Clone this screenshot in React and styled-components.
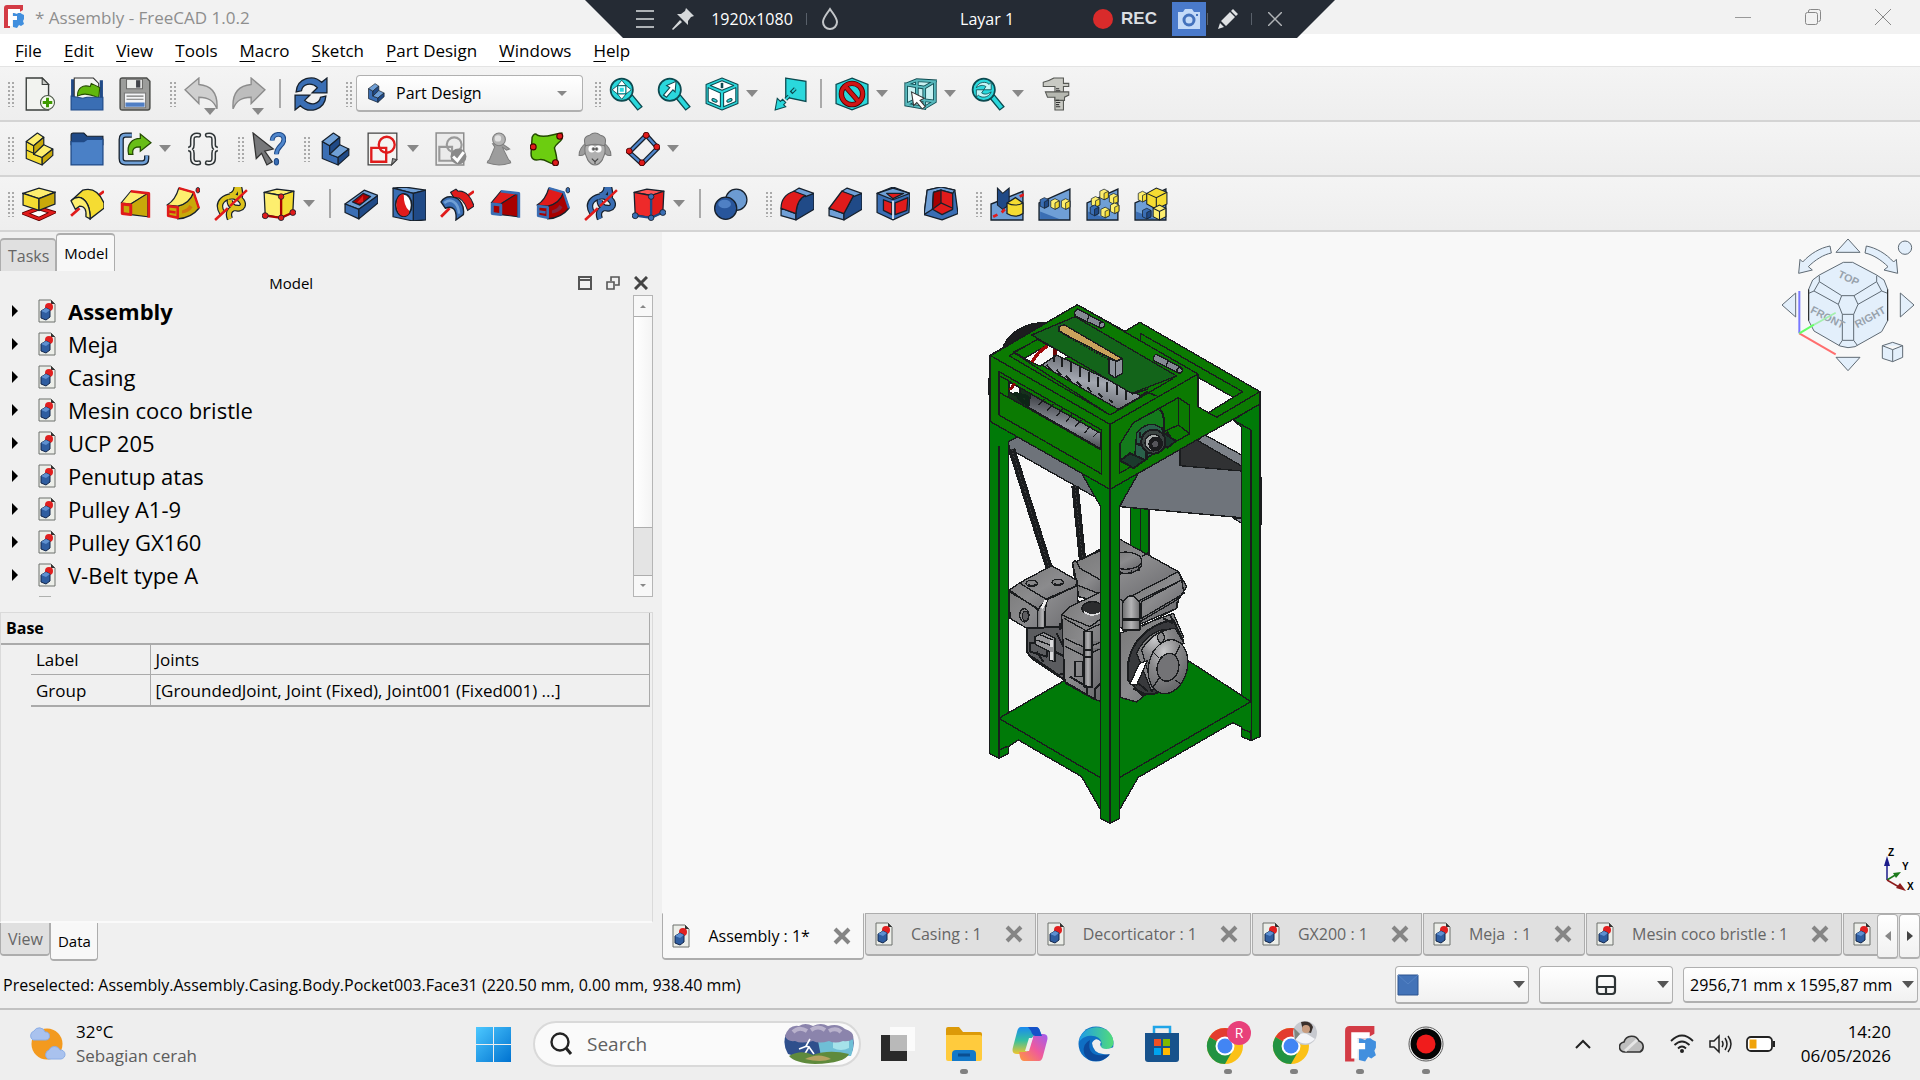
import React, { useState } from 'react';
import styled, { createGlobalStyle, css } from 'styled-components';

const K = '#16202c';
const B = '#3a6eb4';
const BL = '#6f9fd6';
const BD = '#204a87';
const Y = '#f5dc32';
const YL = '#fdee6e';
const YD = '#c8a90a';
const R = '#e01b1b';
const RD = '#a80000';
const T = '#2ad8dc';
const TD = '#0d4a50';

/* ---------- toolbar drawings, all on a 32 x 32 grid ---------- */

const magnifier = (
    <>
        <path d="M18 20l4-3 9 11-4 3z" fill={T} stroke={TD} strokeWidth="1.2" />
        <circle cx="12" cy="12" r="10.500" fill={T} stroke={TD} strokeWidth="1.6" />
    </>
);

// a step: front profile, then the faces running back to the right
const step = (top, front, side) => (
    <g stroke={K} strokeWidth="1.1" strokeLinejoin="round">
        <path d="M4 9L11 13V21L19 24V31L4 25z" fill={front} />
        <path d="M4 9L14.500 1L20.500 5L11 13z" fill={top} />
        <path d="M11 13L20.500 5V12L11 21z" fill={side} />
        <path d="M11 21L20.500 12L29 16L19 24z" fill={top} />
        <path d="M19 24L29 16V22L19 31z" fill={side} />
    </g>
);

const cube = (top, front, side) => (
    <g stroke={K} strokeWidth="1.2" strokeLinejoin="round">
        <path d="M2 5L14 2L30 4L18 8z" fill={top} />
        <path d="M2 5L18 8V29L3 26z" fill={front} />
        <path d="M18 8L30 4L29 24L18 29z" fill={side} />
    </g>
);

const sweep = (a, b, s) => (
    <g strokeLinejoin="round">
        <path d="M26 5L31 20Q24 29 11 30V18Q22 15 26 5z" fill={b} stroke={K} strokeWidth="1.2" />
        <path d="M1 17Q9 12 12 1L26 5Q22 16 11 18z" fill={a} stroke={K} strokeWidth="1.2" />
        <path d="M15 22q5-1 7-5l3 2q-3 5-10 6z" fill={s} opacity=".35" />
        <path d="M12 1L26 5L31 20" fill="none" stroke={s} strokeWidth="2.2" />
        <path d="M2 18L11 19V29L2 27z" fill={b} stroke={s} strokeWidth="2.4" />
        <path d="M3 23l6 1" stroke={s} strokeWidth="2.4" />
        <ellipse cx="30" cy="3" rx="1.800" ry="2.600" fill={s} stroke={K} strokeWidth=".8" />
    </g>
);

const coil = 'M8 25C1 14 11 8 19 9C27 11 30 18 24 20C19 21 14 17 15 12M24 20C17 18 12 23 15 30M15 8Q20 7 21 2L24 2Q25 6 24 11';

const helix = (a) => (
    <>
        <path d={coil} fill="none" stroke={K} strokeWidth="6" />
        <path d={coil} fill="none" stroke={a} strokeWidth="3.800" />
        <path d="M1 31L13 20M15 18L31 3" stroke={R} strokeWidth="2.400" />
    </>
);

const primitive = (top, front, side, line, knob) => (
    <>
        {cube(top, front, side)}
        <path d="M18 9V29M3 27L18 29L29 24" stroke={line} strokeWidth="2.200" fill="none" />
        <g fill={knob} stroke={K} strokeWidth=".8">
            <circle cx="18" cy="9" r="2.600" /><circle cx="3" cy="27" r="2.800" />
            <circle cx="18" cy="29" r="2.600" /><circle cx="29" cy="24" r="2.800" />
        </g>
    </>
);

const loft = (a, b, s) => (
    <g strokeLinejoin="round">
        <path d="M3 15L12 4L28 6L12 16z" fill={a} stroke={K} strokeWidth="1" />
        <path d="M12 16L28 6V28L12 26z" fill={b} stroke={K} strokeWidth="1" />
        <path d="M12 4L29 6V29" fill="none" stroke={s} strokeWidth="2.600" />
        <path d="M4 16L12 17V26L4 25z" fill={b} stroke={s} strokeWidth="2.800" />
    </g>
);

const miniCube = (x, y, a, b) => (
    <g key={x + '-' + y} stroke={K} strokeWidth=".7">
        <path d={`M${x} ${y + 2}l4-2 4 2v6l-4 2-4-2z`} fill={a} />
        <path d={`M${x + 4} ${y + 4}l4-2v6l-4 2z`} fill={b} />
    </g>
);

const ramp = (
    <>
        <path d="M1 31v-16l29-13v29z" fill={BL} stroke={K} strokeWidth="1.300" />
        <path d="M2 23l18 7h-18z" fill={B} />
    </>
);

const icons = {
    newDoc: (
        <>
            <path d="M4 1h15l6 6v24h-21z" fill="#f2f3f0" stroke="#3b3f3d" strokeWidth="1.300" />
            <path d="M19 1v6h6z" fill="#c9cbc6" stroke="#3b3f3d" />
            <circle cx="24" cy="24" r="6.600" fill="#f6fbef" stroke="#4b5648" />
            <path d="M24 19.500v9M19.500 24h9" stroke="#3f9a00" strokeWidth="2.800" />
        </>
    ),
    open: (
        <>
            <path d="M1 2h3v28h-3zM28 3h3v27h-3z" fill={BD} />
            <path d="M4 1h18l5 5v16h-23z" fill="#f4f5f2" stroke="#333" />
            <path d="M7 18c0-8 5-11 12-9l1-3 8 4-1 10-4-2c-7-2-10-3-16 0z" fill="#61b80c" stroke="#254b00" />
            <path d="M1 18l11 2 4-1h15v12h-30z" fill={B} stroke={BD} />
        </>
    ),
    save: (
        <>
            <path d="M2 3q0-2 2-2h23l3 3v25q0 2-2 2h-24q-2 0-2-2z" fill="#9c9d9b" stroke="#4c4e4b" strokeWidth="1.400" />
            <path d="M8 2h15v9h-15z" fill="#ecedeb" stroke="#6a6a68" />
            <path d="M17 3h4v7h-4z" fill="#42444a" />
            <path d="M6 15h20v14h-20z" fill="#f3f4f6" stroke="#777" />
            <path d="M8 18h16M8 21h16" stroke="#777" />
            <path d="M7 24h18v4h-18z" fill="#4f7ec4" />
        </>
    ),
    undo: <path d="M1 12l13-11v6c12 1 18 9 17 23-3-8-8-11-17-11v6z" fill="#cfcfcf" stroke="#8c8c8c" strokeWidth="1.300" />,
    redo: <path d="M31 12l-13-11v6c-12 1-18 9-17 23 3-8 8-11 17-11v6z" fill="#bdbdbd" stroke="#8c8c8c" strokeWidth="1.300" />,
    refresh: (
        <g fill={B} stroke={K} strokeWidth="1.200">
            <path d="M2 14c1-13 16-17 24-9l5-4v14h-14l5-5c-6-6-14-3-15 3z" />
            <path d="M30 18c-1 13-16 17-24 9l-5 4v-14h14l-5 5c6 6 14 3 15-3z" />
        </g>
    ),
    fit: (
        <>
            {magnifier}
            <path d="M12 3l4 5h-8zM12 21l4-5h-8zM3 12l5-4v8zM21 12l-5-4v8z" fill="#fff" stroke={TD} strokeWidth=".8" />
            <path d="M9.500 9.500h5v5h-5z" fill={T} stroke="#fff" strokeWidth="1.200" />
        </>
    ),
    zoomSel: (
        <>
            {magnifier}
            <path d="M6 17l6-7-3-2 9-4-1 10-2-2-6 7z" fill="#fff" stroke={TD} />
        </>
    ),
    isoView: (
        <g stroke={TD} strokeWidth="1" strokeLinejoin="round">
            <path d="M16 1l15 6v18l-15 6-15-6v-18z" fill={T} />
            <path d="M16 3.500l11 4.500-11 4.500-11-4.500zM3 10l11.500 5v13l-11.500-5zM29 10l-11.500 5v13l11.500-5z" fill="#fff" />
            <path d="M16 5.500v5" strokeWidth="2.400" />
            <ellipse cx="9" cy="22" rx="2.600" ry="1.300" transform="rotate(24 9 22)" fill={T} /><ellipse cx="23" cy="22" rx="2.600" ry="1.300" transform="rotate(-24 23 22)" fill={T} />
        </g>
    ),
    alignView: (
        <>
            <path d="M12 1l19 3v19l-19-4z" fill={T} stroke={TD} strokeWidth="1.200" />
            <path d="M2 31l2-11 3 3 2-2 3 3-2 2 2 2z" fill={T} stroke={TD} />
            <path d="M12 21l3-3M17 15l4-4" stroke={TD} strokeWidth="3.600" /><path d="M12 21l3-3M18 14l3-3" stroke={T} strokeWidth="1.600" />
        </>
    ),
    noDraw: (
        <>
            <path d="M16 1l15 6v18l-15 6-15-6v-18z" fill={T} stroke={TD} strokeWidth="1.200" />
            <circle cx="16" cy="16" r="10" fill="none" stroke="#4a0000" strokeWidth="5" />
            <path d="M9 8l14 16" stroke="#4a0000" strokeWidth="5" />
            <circle cx="16" cy="16" r="10" fill="none" stroke="#cf1515" strokeWidth="3.400" />
            <path d="M9 8l14 16" stroke="#cf1515" strokeWidth="3.400" />
        </>
    ),
    cubeSel: (
        <>
            <path d="M3 7l10-4 17 1v19l-10 6-17-3z" fill="#c9f1f2" />
            <path d="M3 7l17 3v19l-17-3zM3 7l10-4 17 1-10 6M30 4v19l-10 6M13 3v18l-10 5M13 21l17 2" fill="none" stroke={TD} strokeWidth="3.400" />
            <path d="M3 7l17 3v19l-17-3zM3 7l10-4 17 1-10 6M30 4v19l-10 6M13 3v18l-10 5M13 21l17 2" fill="none" stroke="#58b9bd" strokeWidth="1.800" />
            <path d="M8 14l12 6-4 2 5 6-3 2-5-6-3 3z" fill="#fff" stroke="#333" />
        </>
    ),
    syncView: (
        <>
            {magnifier}
            <path d="M5 10c2-6 10-6 12-3l2-2v7h-7l2-3c-3-2-6-1-9 1zM19 14c-2 6-10 6-12 3l-2 2v-7h7l-2 3c3 2 6 1 9-1z" fill="#c4f6f7" stroke={TD} strokeWidth=".8" />
        </>
    ),
    caliper: (
        <>
            <path d="M14 1h9v5h5v3h-5v22h-8v-22h-11v-4q5-1 10-4z" fill="#c9cac4" stroke="#555753" />
            <path d="M6 14h22v3l-4 2v3h-9v-3h-7z" fill="#b6b8b1" stroke="#555753" />
            <path d="M16 11h3M16 13h4M16 22h3M16 24h4M16 26h3M16 28h4" stroke="#333" />
        </>
    ),
    part: (
        <>
            {step(YL, Y, YD)}
            <path d="M4 17l7 3" stroke={K} />
        </>
    ),
    folder: (
        <>
            <path d="M1 3q0-2 2-2h10l3 3h15v8h-30z" fill={BD} stroke={K} />
            <path d="M1 9h12l3-2h15v24h-30z" fill="#4a80c6" stroke={BD} strokeWidth="1.200" />
        </>
    ),
    link: (
        <>
            <path d="M13 3h-6q-4 0-4 4v18q0 4 4 4h16q4 0 4-4v-3" fill="none" stroke={K} strokeWidth="5" />
            <path d="M13 3h-6q-4 0-4 4v18q0 4 4 4h16q4 0 4-4v-3" fill="none" stroke={BL} strokeWidth="2.600" />
            <path d="M10 21c-2-9 3-15 11-15v-4l10 8-10 8v-4c-5 0-8 1-7 7z" fill="#68bd16" stroke="#234a00" strokeWidth="1.200" />
        </>
    ),
    braces: (
        <g fill="none" strokeLinecap="round">
            <path d="M12 3q-6-1-6 4v5q0 4-4 4 4 0 4 4v5q0 5 6 4M20 3q6-1 6 4v5q0 4 4 4-4 0-4 4v5q0 5-6 4" stroke="#2e3436" strokeWidth="4.600" />
            <path d="M12 3q-6-1-6 4v5q0 4-4 4 4 0 4 4v5q0 5 6 4M20 3q6-1 6 4v5q0 4 4 4-4 0-4 4v5q0 5-6 4" stroke="#f4f4f4" strokeWidth="1.800" />
        </g>
    ),
    whatsThis: (
        <>
            <path d="M1 1l19 15-8 2 7 10-5 3-5-11-5 5z" fill="#77787a" stroke="#333" strokeWidth="1.200" />
            <path d="M19 8c0-7 11-8 11-1 0 6-7 6-7 14" fill="none" stroke={BD} strokeWidth="4.600" />
            <path d="M19 8c0-7 11-8 11-1 0 6-7 6-7 14" fill="none" stroke="#4f86cc" strokeWidth="2.600" />
            <ellipse cx="23" cy="28" rx="2" ry="3" fill={B} stroke={BD} />
        </>
    ),
    body: step(BL, B, BD),
    sketch: (
        <>
            <path d="M2 1h27v25l-5 5h-22z" fill="#f4f4f2" stroke="#444" strokeWidth="1.200" />
            <path d="M24 31l1-6 4 1z" fill="#999" stroke="#444" />
            <path d="M5 15h14v13h-14z" fill="none" stroke={R} strokeWidth="2.200" />
            <circle cx="19.500" cy="12" r="7.500" fill="none" stroke={R} strokeWidth="2.200" />
        </>
    ),
    sketchCheck: (
        <>
            <path d="M2 1h26v30h-26z" fill="#ebebeb" stroke="#8d8d8d" strokeWidth="1.400" />
            <path d="M5 14h12v13h-12z" fill="none" stroke="#9a9a9a" strokeWidth="2" />
            <circle cx="19" cy="12" r="7" fill="none" stroke="#9a9a9a" strokeWidth="2" />
            <circle cx="23" cy="23" r="7.500" fill="#8a8a8a" />
            <path d="M18 23l4 4 6-8" fill="none" stroke="#fff" strokeWidth="2.800" />
        </>
    ),
    pawn: (
        <>
            <path d="M5 29q0-2 2-3l5-12-2-3h9l7 5-3 1-4-3 6 12q2 1 2 3-11 4-22 0z" fill="#9d9d9d" stroke="#7e7e7e" />
            <circle cx="16" cy="7" r="6" fill="#b4b4b4" stroke="#7e7e7e" /><circle cx="15" cy="6" r="3" fill="#e2e2e2" />
        </>
    ),
    surface: (
        <>
            <path d="M2 5q2-5 5-2c8 3 13-1 23-2 3 8-6 9-7 14 2 8 3 10 2 15-8 1-9-5-16-4-5 1-8 0-8-6z" fill="#6ccd10" stroke="#234a00" strokeWidth="1.400" />
            <g fill={R} stroke="#400"><circle cx="28" cy="4" r="2.800" /><circle cx="3" cy="14" r="2.800" /><circle cx="24" cy="29" r="2.800" /></g>
        </>
    ),
    sheep: (
        <g stroke="#777" strokeWidth="1">
            <path d="M8 10q-7 5-7 12 6 1 7-6zM24 10q7 5 7 12-6 1-7-6z" fill="#9c9c9c" />
            <path d="M7 12c-2 9 1 10 2 14q3 5 7 5 4 0 7-5c1-4 4-5 2-14z" fill="#b0b0b0" />
            <path d="M7 13q-3-9 4-10 5-4 10 0 7 1 4 10-9-3-18 0z" fill="#a3a3a3" />
            <circle cx="13" cy="16" r="3.200" fill="#fff" stroke="none" /><circle cx="19" cy="16" r="3.200" fill="#fff" stroke="none" />
            <circle cx="14.500" cy="16" r="1.200" fill="#444" /><circle cx="17.500" cy="16" r="1.200" fill="#444" />
            <path d="M13 25l3 3 3-3M16 28v2" fill="none" stroke="#444" />
        </g>
    ),
    datum: (
        <>
            <path d="M19 3l11 12-15 15-12-11z" fill="none" stroke={K} strokeWidth="4.600" />
            <path d="M19 3l11 12-15 15-12-11z" fill="none" stroke="#4f86cc" strokeWidth="2.200" />
            <g fill={R} stroke="#400" strokeWidth=".8">
                <circle cx="19" cy="3" r="2.800" /><circle cx="29" cy="14" r="2.800" /><circle cx="15" cy="29" r="2.800" /><circle cx="3" cy="18" r="2.800" />
            </g>
        </>
    ),
    pad: (
        <>
            <path d="M3 25l13-5 13 4-13 6z" fill="#fff" stroke="#5a0000" strokeWidth="4" />
            <path d="M3 25l13-5 13 4-13 6z" fill="none" stroke={R} strokeWidth="2.400" />
            <g stroke={K} strokeWidth="1.200">
                <path d="M1 6l15-5 15 4-15 6z" fill={YL} /><path d="M1 6l15 5v11l-15-5z" fill={Y} /><path d="M16 11l15-6v11l-15 6z" fill={YD} />
            </g>
        </>
    ),
    revolution: (
        <>
            <path d="M24 10l8-6M1 27l8-7" stroke={R} strokeWidth="2.600" />
            <path d="M1 13L12 3Q25 -1 32 15V20L19 30Q19 14 10 10Q5 9 1 13z" fill={Y} stroke={K} strokeWidth="1.200" />
            <path d="M1 13Q5 9 10 10Q19 14 19 30L15 28Q16 18 9 18L5 21z" fill={YL} stroke={K} strokeWidth="1.200" />
        </>
    ),
    loft: loft(YL, YD, R),
    sweep: sweep(YL, YD, R),
    helix: helix('#dcc21c'),
    primitive: primitive(YL, YL, Y, RD, R),
    pocket: (
        <g stroke={K} strokeWidth="1.200" strokeLinejoin="round">
            <path d="M1 16L19 3L32 8L14 21z" fill={BL} /><path d="M1 16L14 21V30L1 24z" fill={B} /><path d="M14 21L32 8V15L14 30z" fill={BD} />
            <path d="M8 14L18 6L25 9L15 17z" fill={RD} /><path d="M12 15L18 8V14z" fill={R} stroke="none" />
        </g>
    ),
    hole: (
        <g stroke={K} strokeWidth="1.200" strokeLinejoin="round">
            <path d="M1 1L12 0L32 3L20 6z" fill={BL} /><path d="M20 6L32 3V31L20 32z" fill={BD} /><path d="M1 1L20 6V32L1 28z" fill={B} />
            <ellipse cx="11" cy="17" rx="7.500" ry="10.500" fill="#fff" strokeWidth="1.600" />
            <path d="M11 6.500C2 7 2 26 11 27.500Q17 27 16 22Q11 18 11 6.500z" fill={R} stroke="none" />
        </g>
    ),
    groove: (
        <>
            <path d="M25 9l7-5M1 28l8-8" stroke={R} strokeWidth="2.600" />
            <path d="M10 5l5-3 2 2c8-1 13 7 15 14l-6 4c-3-9-7-13-13-12z" fill={R} stroke={K} />
            <path d="M1 14c5-8 16-5 19 1q3 5 2 11l-7 5c1-10-3-14-10-11z" fill={B} stroke={K} strokeWidth="1.300" />
            <path d="M4 15c6-5 13-1 14 10" stroke={BL} strokeWidth="2.400" fill="none" />
        </>
    ),
    subLoft: loft(R, RD, B),
    subSweep: sweep(R, RD, B),
    subHelix: helix(B),
    subPrimitive: primitive('#f55', '#ee2a2a', R, BD, B),
    boolean: (
        <g stroke={K} strokeWidth="1.200">
            <circle cx="21" cy="12" r="10" fill="#6c9bd2" /><circle cx="11" cy="20" r="10.400" fill="#28569c" />
            <ellipse cx="10" cy="16" rx="6" ry="4" fill="#4f80c4" stroke="none" />
        </g>
    ),
    fillet: (
        <g stroke={K} strokeWidth="1.200" strokeLinejoin="round">
            <path d="M1 20L15 25V31L1 27z" fill={BL} />
            <path d="M15 25Q16 11 24 8L32 6V21L15 31z" fill={BD} />
            <path d="M13 4L18 1L32 6L24 9z" fill={BL} />
            <path d="M1 20Q1 8 13 4L24 8Q16 11 15 25z" fill={R} />
        </g>
    ),
    chamfer: (
        <g stroke={K} strokeWidth="1.200" strokeLinejoin="round">
            <path d="M1 20L15 25V31L1 27z" fill={BL} />
            <path d="M15 25L24 8L32 6V21L15 31z" fill={BD} />
            <path d="M13 4L18 1L32 6L24 9z" fill={BL} />
            <path d="M1 20L13 4L24 8L15 25z" fill={R} />
        </g>
    ),
    draft: (
        <g stroke={K} strokeWidth="1.200" strokeLinejoin="round">
            <path d="M1 6L16 0L32 6L31 24L16 31L1 24z" fill={B} /><path d="M1 6L16 1L32 6L16 12z" fill={BL} />
            <path d="M10 6L26 6L16 11z" fill={R} />
            <path d="M7 12L15 15V26L7 22z" fill={R} /><path d="M18 15L30 10L29 22L18 26z" fill={R} />
            <path d="M16 13V30" stroke="#e8eef5" strokeWidth="1.600" />
        </g>
    ),
    thickness: (
        <g stroke={K} strokeWidth="1.200" strokeLinejoin="round">
            <path d="M3 3L16 0L29 3L32 25L17 31L0 26z" fill={B} /><path d="M3 3L16 0L29 3L27 6L16 3L9 5L8 21L0 26z" fill={BL} />
            <path d="M9 5L16 3L27 6V21L17 26L8 21z" fill={R} /><path d="M9 5L16 3V15L8 21z" fill={RD} /><path d="M16 15L27 20" fill="none" />
        </g>
    ),
    mirrored: (
        <>
            <path d="M1 31v-15l30-12v27z" fill={BL} stroke={K} strokeWidth="1.300" />
            <path d="M7 1l5 5 6-5v16l-6 4-5-4z" fill={BD} stroke={K} />
            <path d="M3 28l4-2M11 24l3-3M28 9l4-2" stroke={R} strokeWidth="2.600" />
            <path d="M16 15l8-5 7 5v10q-7 5-15 0z" fill={Y} stroke={K} strokeWidth="1.200" /><path d="M16 15q8 4 15 0" fill="none" stroke={K} />
        </>
    ),
    linearPattern: <>{ramp}{miniCube(2, 10, B, BD)}{miniCube(12, 11, YL, Y)}{miniCube(22, 11, YL, Y)}</>,
    polarPattern: <>{ramp}{miniCube(13, 2, YL, Y)}{miniCube(5, 9, YL, Y)}{miniCube(22, 6, YL, Y)}{miniCube(4, 17, B, BD)}{miniCube(23, 15, YL, Y)}{miniCube(14, 19, YL, Y)}</>,
    multiTransform: (
        <>
            {ramp}{miniCube(4, 4, YL, Y)}
            <path d="M12 6l9-5 10 4v11l-10 5-9-5z" fill={Y} stroke={K} /><path d="M12 6l9 4 10-5M21 10v11" fill="none" stroke={K} />
            {miniCube(8, 20, B, BD)}<path d="M18 20l6-3 6 3v8l-6 3-6-3z" fill={YL} stroke={K} /><path d="M18 20l6 3 6-3M24 23v8" fill="none" stroke={K} />
        </>
    ),
};

function Icon({ name, size = 34 }) {
    return <svg width={size} height={size} viewBox="0 0 32 32" aria-hidden="true">{icons[name]}</svg>;
}

function DocIcon() {
    return (
        <svg width="18" height="24" viewBox="0 0 18 24" aria-hidden="true">
            <path d="M1 1h12l4 4v18H1z" fill="#eceee9" stroke="#6d716c" />
            <path d="M13 1v4h4z" fill="#333" />
            <circle cx="11" cy="8" r="4" fill="#e02020" />
            <path d="M3 12l5-3 4 2v7l-4 3-5-2z" fill="#2f5da0" stroke="#13264a" />
            <path d="M3 12l5-3 4 2-4 3z" fill="#5e90d0" />
        </svg>
    );
}

function CloseIcon() {
    return (
        <svg width="18" height="18" viewBox="0 0 18 18" aria-hidden="true">
            <path d="M2 2l14 14M16 2L2 16" stroke="#858585" strokeWidth="4" />
        </svg>
    );
}

function FreeCadLogo({ width, height }) {
    return (
        <svg width={width} height={height} viewBox="0 0 20 24" aria-hidden="true">
            <path d="M3 0h16v5l-5 3H6v15H0V3q0-3 3-3z" fill="#d33b45" />
            <path d="M10 8l3 1 2-2 3 2 2 1v4l-1 2 1 3-3 2-2-1-2 3-4-1V8z" fill="#418fde" />
            <path d="M4 4h12v4h-8v3h5v4h-5v6H4z" fill="#fff" />
        </svg>
    );
}

const menus = ['File', 'Edit', 'View', 'Tools', 'Macro', 'Sketch', 'Part Design', 'Windows', 'Help'];

// '|' is a separator, a trailing 'v' in the pair means a drop-down arrow beside the button
const standardBars = [
    [
        [['newDoc'], ['open'], ['save']],
        [['undo'], ['redo'], '|', ['refresh']],
        'workbench',
        [['fit'], ['zoomSel'], ['isoView', 'v'], ['alignView'], '|', ['noDraw', 'v'], ['cubeSel', 'v'], ['syncView', 'v'], ['caliper']],
    ],
    [
        [['part'], ['folder'], ['link', 'v'], ['braces']],
        [['whatsThis']],
        [['body'], ['sketch', 'v'], ['sketchCheck'], ['pawn'], ['surface'], ['sheep'], ['datum', 'v']],
    ],
    [
        [['pad'], ['revolution'], ['loft'], ['sweep'], ['helix'], ['primitive', 'v'], '|', ['pocket'], ['hole'], ['groove'], ['subLoft'], ['subSweep'], ['subHelix'], ['subPrimitive', 'v'], '|', ['boolean']],
        [['fillet'], ['chamfer'], ['draft'], ['thickness']],
        [['mirrored'], ['linearPattern'], ['polarPattern'], ['multiTransform']],
    ],
];

const treeItems = ['Assembly', 'Meja', 'Casing', 'Mesin coco bristle', 'UCP 205', 'Penutup atas', 'Pulley A1-9', 'Pulley GX160', 'V-Belt type A', ''];

const documents = ['Assembly : 1*', 'Casing : 1', 'Decorticator : 1', 'GX200 : 1', 'Meja  : 1', 'Mesin coco bristle : 1'];

function ToolGroup({ items }) {
    return (
        <Group>
            <Grip />
            {items === 'workbench' ? (
                <Workbench>
                    <Icon name="body" size={20} />
                    <WorkbenchSelect aria-label="Workbench" defaultValue="Part Design">
                        <option>Part Design</option>
                    </WorkbenchSelect>
                    <Caret $small />
                </Workbench>
            ) : items.map((item, i) => item === '|' ? <Separator key={i} /> : (
                <React.Fragment key={i}>
                    <ToolButton aria-label={item[0]}>
                        <Icon name={item[0]} />
                        {(item[0] === 'undo' || item[0] === 'redo') && <CornerCaret />}
                    </ToolButton>
                    {item[1] && <DropButton aria-label={item[0] + ' options'}><Caret /></DropButton>}
                </React.Fragment>
            ))}
        </Group>
    );
}

function RecorderBar() {
    return (
        <Recorder>
            <RecorderIcon aria-label="Menu">
                <svg width="18" height="20" viewBox="0 0 18 20"><path d="M0 2h18M0 10h18M0 18h18" stroke="#aeb2b6" strokeWidth="2" /></svg>
            </RecorderIcon>
            <RecorderIcon aria-label="Pin">
                <svg width="22" height="22" viewBox="0 0 22 22"><path d="M14 0l8 8-3 1-3 4 0 4-11-11 4 0 4-3zM8 12l2 2-9 8-1-1z" fill="#d5d8da" /></svg>
            </RecorderIcon>
            <RecorderText>1920x1080</RecorderText>
            <RecorderLine />
            <RecorderIcon aria-label="Opacity">
                <svg width="18" height="24" viewBox="0 0 18 24"><path d="M9 2c4 6 7 9 7 13a7 7 0 0 1-14 0c0-4 3-7 7-13z" fill="none" stroke="#c3c6c9" strokeWidth="2" /></svg>
            </RecorderIcon>
            <RecorderTitle>Layar 1</RecorderTitle>
            <RecordButton><RecordDot />REC</RecordButton>
            <Camera aria-label="Screenshot">
                <svg width="24" height="20" viewBox="0 0 24 20"><path d="M1 3h5l2-3h7l2 3h6v17H1z" fill="#c4daf8" /><circle cx="12" cy="11" r="5" fill="none" stroke="#4472bd" strokeWidth="3" /><path d="M19 5h2v2h-2z" fill="#4472bd" /></svg>
            </Camera>
            <RecorderLine $tight />
            <RecorderIcon aria-label="Draw">
                <svg width="20" height="20" viewBox="0 0 20 20"><path d="M3 12L12 3l5 5-9 9zM13 2l2-2 5 5-2 2zM2 14l4 4-6 2z" fill="#e0e2e4" /></svg>
            </RecorderIcon>
            <RecorderLine />
            <RecorderIcon aria-label="Close recorder">
                <svg width="14" height="14" viewBox="0 0 14 14"><path d="M0 0l14 14M14 0L0 14" stroke="#b0b3b6" strokeWidth="1.500" /></svg>
            </RecorderIcon>
        </Recorder>
    );
}

function ModelPanel() {
    return (
        <Dock>
            <TabRow>
                <DockTab>Tasks</DockTab>
                <DockTab $active>Model</DockTab>
            </TabRow>
            <DockTitle>
                <span>Model</span>
                <DockTools>
                    <DockTool aria-label="Overlay"><svg width="14" height="14" viewBox="0 0 14 14"><path d="M1 1h12v12H1zM1 4h12" fill="none" stroke="#555" strokeWidth="2" /></svg></DockTool>
                    <DockTool aria-label="Float"><svg width="14" height="14" viewBox="0 0 14 14"><path d="M1 6h7v7H1zM5 5V1h8v8H9" fill="none" stroke="#555" strokeWidth="1.600" /></svg></DockTool>
                    <DockTool aria-label="Close panel"><svg width="14" height="14" viewBox="0 0 14 14"><path d="M1 1l12 12M13 1L1 13" stroke="#444" strokeWidth="3" /></svg></DockTool>
                </DockTools>
            </DockTitle>
            <TreeArea>
                <Tree>
                    {treeItems.map((name, i) => (
                        <TreeRow key={i} $bold={i === 0}>
                            <svg width="8" height="12" viewBox="0 0 8 12" aria-hidden="true"><path d="M1 0l6 6-6 6z" fill="#000" /></svg>
                            <DocIcon />
                            <span>{name}</span>
                        </TreeRow>
                    ))}
                </Tree>
                <ScrollBar>
                    <ScrollEnd aria-label="Scroll up"><svg width="6" height="4" viewBox="0 0 6 4"><path d="M0 4l3-3 3 3z" fill="#888" /></svg></ScrollEnd>
                    <ScrollTrack><ScrollThumb /></ScrollTrack>
                    <ScrollEnd aria-label="Scroll down"><svg width="6" height="4" viewBox="0 0 6 4"><path d="M0 0l3 3 3-3z" fill="#888" /></svg></ScrollEnd>
                </ScrollBar>
            </TreeArea>
            <Properties>
                <PropTable>
                    <tbody>
                        <tr><PropHead colSpan="3" scope="colgroup">Base</PropHead></tr>
                        <tr><PropIndent /><PropName scope="row">Label</PropName><PropValue>Joints</PropValue></tr>
                        <tr><PropIndent /><PropName scope="row" $last>Group</PropName><PropValue $last>[GroundedJoint, Joint (Fixed), Joint001 (Fixed001) ...]</PropValue></tr>
                    </tbody>
                </PropTable>
            </Properties>
            <TabRow $bottom>
                <DockTab $bottom>View</DockTab>
                <DockTab $bottom $active>Data</DockTab>
            </TabRow>
        </Dock>
    );
}

/* the decorticator: frame, casing, drum, hopper and engine */
function Machine() {
    const top = '#0b7a02';
    const leg = '#007a08';
    const belts = 'M155 478L268 835M345 588L368 815';
    return (
        <svg width="330" height="550" viewBox="0 0 990 1650" shapeRendering="crispEdges" strokeLinejoin="round" role="img" aria-label="Assembly model">
            <defs>
                <linearGradient id="drum" x1=".6" y1=".1" x2=".4" y2=".9">
                    <stop offset="0" stopColor="#6c6f76" /><stop offset=".5" stopColor="#a3a7b0" /><stop offset="1" stopColor="#6c6f76" />
                </linearGradient>
                <linearGradient id="drum2" x1=".6" y1=".1" x2=".4" y2=".9">
                    <stop offset="0" stopColor="#33353a" /><stop offset=".6" stopColor="#8e929b" /><stop offset="1" stopColor="#3d3f44" />
                </linearGradient>
                <linearGradient id="metal" x1="0" y1="0" x2="1" y2="1">
                    <stop offset="0" stopColor="#767676" /><stop offset=".5" stopColor="#8b8b8d" /><stop offset="1" stopColor="#66666a" />
                </linearGradient>
                <linearGradient id="shine" x1="0" y1="0" x2="1" y2="0">
                    <stop offset="0" stopColor="#6c6c6e" /><stop offset=".5" stopColor="#b4b4b6" /><stop offset="1" stopColor="#6c6c6e" />
                </linearGradient>
                <radialGradient id="cover" cx=".3" cy=".25" r=".9">
                    <stop offset="0" stopColor="#c8c8ca" /><stop offset=".4" stopColor="#88888a" /><stop offset="1" stopColor="#5f5f62" />
                </radialGradient>
            </defs>
            <g stroke="#1a1c1e" strokeWidth="4">
                <path d="M130 168C150 125 200 94 262 99L280 120L200 170z" fill="#1d1d1f" />
                <path d="M86 265v50" strokeWidth="6" />
                <path d="M904 560v145" strokeWidth="5" />
                {/* rear leg and hopper */}
                <path d="M512 640h55v200h-55zM541 650v180" fill={leg} />
                <path d="M145 455L175 438L420 560L422 628L400 618L148 476z" fill="#6e737a" />
                <path d="M480 650L530 553L735 435L845 495V683z" fill="#6f747b" />
                <path d="M735 435L845 495V528L710 452z" fill="#7d8289" />
                <path d="M660 465L710 450L845 528V543L660 527z" fill="#303133" />
                <path d="M820 684L845 700v-16z" fill="#8b9097" />
                {/* base plate */}
                <path d="M117 1285L480 1075L560 1030L873 1235L478 1463L450 1480z" fill={leg} />
                <path d="M117 1285L450 1480L478 1463L873 1235L900 1240V1340L873 1352L845 1340V1312L818 1298L535 1462L478 1560V1585L450 1600L422 1585V1560L365 1460L175 1350L145 1370V1390L117 1405L88 1390V1270z" fill={leg} />
                <path d="M117 1405V1380L145 1368M873 1352V1328L845 1316" fill="none" />
                {/* belts */}
                <path d={belts} strokeWidth="22" fill="none" />
                <path d={belts} strokeWidth="3" stroke="#3c3c3e" fill="none" strokeDasharray="5 6" />

                {/* engine */}
                <g fill="url(#metal)">
                    <path d="M480 1030L640 970L670 1040L560 1210L530 1236L480 1222z" />
                    <path d="M338 820L480 748L655 845L680 890L655 930L650 955L500 1020L430 990L345 880z" />
                    <path d="M338 820L425 780L480 748L655 845L520 915L490 935L440 895z" />
                    <path d="M655 845L665 870L530 935L520 915zM665 870L672 910L545 985V935z" />
                    <path d="M672 905L650 930L540 995M650 935L650 955L545 1010" fill="none" />
                    <ellipse cx="497" cy="820" rx="48" ry="30" /><ellipse cx="497" cy="812" rx="48" ry="26" />
                    <path d="M545 800L570 785M450 830v14M480 842v12M515 840v12M537 832v12" fill="none" />
                    <path d="M487 940Q512 895 540 940V985H487z" fill="url(#shine)" /><path d="M487 990h53v30h-53z" fill="url(#shine)" />
                    <path d="M338 820Q345 800 360 835L440 880V920L352 885z" />
                    <path d="M352 885L440 920V940L355 920z" />
                    <path d="M148 900L275 827L352 872L355 980L240 1038L150 985z" />
                    <path d="M148 900L180 878L275 827L352 872L345 890L260 930L235 960z" />
                    <path d="M148 905L232 955V1028M235 960L262 925L355 885M180 880L262 930" fill="none" />
                    <path d="M240 950L262 928L255 965V1030L232 1030V965z" fill="url(#shine)" />
                    <path d="M245 955L258 930" stroke="#eee" strokeWidth="8" />
                    <ellipse cx="215" cy="880" rx="17" ry="9" /><ellipse cx="293" cy="877" rx="17" ry="9" />
                    <path d="M203 884q12 10 25 0M281 881q12 10 25 0" strokeWidth="7" fill="none" />
                    <ellipse cx="193" cy="976" rx="14" ry="20" /><ellipse cx="196" cy="978" rx="9" ry="14" fill="#5d5d60" />
                </g>
                {/* carburettor side */}
                <path d="M200 1015L305 1010L340 1090V1185L290 1155L215 1105L200 1085z" fill="#5b5c5f" strokeWidth="6" />
                <path d="M210 1060v25l50 15v-40zM275 1080l40 20v40M215 1100l80 55 40-10M290 1030l30 60M230 1085l20 30M300 1020v-20M335 1100v70M312 1060v115" fill="none" strokeWidth="6" />
                <path d="M225 1040L250 1028L285 1045V1115L268 1110V1085L225 1062z" fill="#97979a" /><path d="M274 1050v20M274 1085v26" stroke="#dcdcde" strokeWidth="8" />
                <path d="M230 1050l40 15M240 1034l38 16" fill="none" />
                <path d="M305 975L425 905V1235L405 1228L315 1175z" fill="url(#metal)" />
                <path d="M305 975L330 950L425 905V985L390 1010zM312 985L378 1022L425 1000M315 1045L378 1075L425 1055M315 1068L372 1098L425 1075" fill="url(#metal)" />
                <path d="M372 1025h24v165h-24z" fill="url(#shine)" /><path d="M370 1080h30M370 1100h30M372 1190h28" strokeWidth="7" />
                <path d="M345 1115h24v45h-24z" fill="none" /><path d="M330 1160l50 30v25M315 1178l90 50v-30l20-20" fill="none" strokeWidth="6" />
                <ellipse cx="398" cy="955" rx="32" ry="20" fill="#2b2c2e" /><path d="M372 965q20 18 50 3" stroke="#dcdcde" strokeWidth="5" fill="none" />
                {/* fan cover */}
                <path d="M505 1170C490 1060 570 1000 640 990L668 1050L590 1210L545 1215z" fill="#38393c" strokeWidth="6" />
                <path d="M530 1090C555 1035 600 1010 645 1020L665 1060L575 1205z" fill="url(#metal)" />
                <path d="M545 1080Q580 1020 645 1015L672 1060Q590 1080 565 1150z" fill="url(#cover)" />
                <ellipse cx="624" cy="1130" rx="58" ry="82" transform="rotate(14 624 1130)" fill="url(#cover)" />
                <ellipse cx="624" cy="1132" rx="32" ry="42" transform="rotate(14 624 1132)" fill="#737376" />
                <path d="M598 1105L575 1082M645 1098L660 1065M600 1160L580 1190M645 1170L660 1180" fill="none" />
                <path d="M538 1120L562 1112L530 1185L510 1182z" fill="#fff" /><ellipse cx="603" cy="1042" rx="10" ry="15" fill="#8a8a8c" />
                <path d="M520 1195l40 20M535 1180l30 25M610 985l30 15M630 975l10 20" fill="none" strokeWidth="6" />

                {/* legs */}
                <path d="M88 393L175 440L117 468V1285V1405L88 1390z" fill={leg} />
                <path d="M88 393L175 440L145 455V1268L117 1285V1290L88 1270z" fill={leg} />
                <path d="M88 1260V1300L115 1310V1284L88 1268z" fill={leg} stroke="none" />
                <path d="M88 1240V1390M117 468V1285" fill="none" />
                <path d="M820 390L900 340V1340L873 1352V1235L845 1217V412z" fill={leg} />
                <path d="M820 390L873 420V1235" fill="none" />
                <path d="M870 1238V1320" stroke={leg} strokeWidth="8" />
                <path d="M365 550L450 595L535 550L478 650V1585L450 1600L422 1585V650z" fill={leg} />
                <path d="M450 598V1600" />

                {/* table frame */}
                <path d="M495 124L540 97L900 305V342L450 598L88 393V197L352 44z" fill={top} />
                <path d="M900 305L770 382L745 368M541 130L848 305L745 368M541 130V152" fill="none" />
                <path d="M714 262L820 322L745 368L714 350z" fill="#f8f8f8" />
                {/* casing */}
                <path d="M92 197L352 44L714 252L450 403z" fill={top} />
                <path d="M714 252V350M450 403V598M92 197V393" fill="none" />
                <path d="M160 187L236 147L520 308L545 318L450 375z" fill={top} />
                <path d="M147 197L215 160M147 197L450 375L640 265" fill="none" />
                <path d="M193 205L236 180L262 165L330 200L240 228z" fill="#f8f8f8" />
                <path d="M165 187L232 148L262 165L193 205z" fill={top} />
                <path d="M262 168C240 182 225 198 217 216" stroke="#a00808" strokeWidth="10" fill="none" />
                <path d="M285 172v25" stroke="#6d0505" strokeWidth="13" fill="none" />
                <path d="M245 225L290 195L545 318L475 358z" fill="url(#drum)" />
                <path d="M282 195v20M307 205v25M333 217v28M360 230v30M388 245v30M415 262v28M442 275v30M470 285v30M497 300v30M260 225l14 16M290 240l14 16M318 258l14 14M350 276l14 12M382 292l12 14M414 310l12 12M446 328l12 10" strokeWidth="6" fill="none" />
                <path d="M215 135L345 80L650 258L515 310z" fill="#13641a" />
                <path d="M540 318l20-12 30 12M515 312l50-15" fill="none" strokeWidth="5" />
                <path d="M297 110L312 104L485 205L470 214L297 124z" fill="#c9a25c" />
                <path d="M300 125L445 208" strokeWidth="6" strokeDasharray="5 4" />
                <path d="M447 207L470 214L487 205V250L465 263L447 252z" fill="#8e939c" /><path d="M467 214V262" />
                <g fill="#858a94">
                    <path d="M352 57L430 97Q436 108 424 115L346 78Q340 66 352 57z" /><path d="M387 76l-6 18" />
                    <path d="M588 192L664 233Q670 244 658 250L582 212Q578 200 588 192z" /><path d="M624 212l-6 18" />
                    <circle cx="426" cy="105" r="8" /><circle cx="659" cy="241" r="8" />
                </g>
                {/* left slot */}
                <path d="M117 245L425 420V552L117 375z" fill={top} />
                <path d="M119 258L423 432V480L210 358L119 308z" fill="#16301c" />
                <path d="M119 258L145 272V322L119 308z" fill={top} />
                <path d="M147 276L180 294V325L147 305z" fill="#f8f8f8" /><path d="M165 280L150 300" stroke="#8a0606" strokeWidth="9" />
                <path d="M212 312L422 430V476L206 352z" fill="url(#drum2)" />
                <path d="M160 310l40 10v30M175 320l20 20" stroke="#0e2517" strokeWidth="12" fill="none" />
                <path d="M235 345l18-18M262 362l18-20M290 378l18-22M318 395l18-22M346 410l18-20M374 428l18-20M400 440l14-14" strokeWidth="4" fill="none" />
                {/* right window with bearing */}
                <path d="M478 465L520 398L655 323L688 345V432L478 550z" fill={top} />
                <path d="M655 323V405L688 430M655 405L612 425" fill="none" />
                <path d="M480 512V462L520 398L600 355Q618 380 608 420L570 470z" fill="#147a1c" />
                <path d="M600 358Q618 380 610 425" fill="none" strokeWidth="7" />
                <path d="M525 490L530 430Q565 385 605 415L620 460L540 520z" fill="#2a604a" />
                <path d="M480 512L510 490L555 510L520 535L500 522zM610 428l38 25-25 20-28-15z" fill="#1b3a2c" strokeWidth="6" />
                <path d="M525 460l35 10v40M540 425v20M620 425l10 15" fill="none" strokeWidth="8" />
                <circle cx="580" cy="455" r="36" fill="#3b4442" strokeWidth="6" /><circle cx="580" cy="458" r="25" fill="#a6aaa9" /><circle cx="587" cy="462" r="20" fill="#1b1b1d" /><path d="M582 450h10l6 12-6 12h-12l-6-12z" fill="#55555a" />
            </g>
        </svg>
    );
}

function NavCube() {
    return (
        <CubeBox>
            <svg width="180" height="148" viewBox="0 36 540 444" role="img" aria-label="Navigation cube">
                <g fill="#e3effb" stroke="#5f6a74" strokeWidth="3" strokeLinejoin="round">
                    <path d="M324 57L360 97H288zM324 452L288 412H360zM126 255L167 219V291zM522 255L481 219V291z" />
                    <path d="M270 78L274 99C250 104 225 120 205 140L217 150L176 160L180 118L188 126C212 100 240 84 270 78zM379 78L375 99C399 104 424 120 444 140L432 150L473 160L469 118L461 126C437 100 409 84 379 78z" />
                    <circle cx="495" cy="83" r="20" />
                    <path d="M310 127H338L410 165L432 180L443 208V302L425 335L345 380L324 383L300 378L222 333L206 302V208L218 180L238 165z" />
                    <path d="M238 167V185L305 227H342L410 185V167M238 185L222 213L206 220M222 213L295 253L307 283H341L354 253L425 213L410 185M425 213L443 220M305 227L295 253M342 227L354 253M307 283V361H341V283M307 361L297 376M341 361L352 376" fill="none" />
                    <path d="M443 208V302M206 208V302" stroke="#222" />
                    <path d="M458 367L488 377V412L458 425L427 415V377zM427 377L458 389L488 377M458 389V425" />
                </g>
                <CubeText transform="translate(292 170) rotate(26)">TOP</CubeText>
                <CubeText transform="translate(209 277) rotate(27)">FRONT</CubeText>
                <CubeText transform="translate(352 325) rotate(-29)">RIGHT</CubeText>
                <path d="M178 340V213" stroke="#7878ff" strokeWidth="6" />
                <path d="M178 340L287 403" stroke="#ff6e6e" strokeWidth="6" />
                <path d="M178 340L222 314" stroke="#64ff64" strokeWidth="6" /><path d="M222 314L287 278" stroke="#a4f0ae" strokeWidth="5" />
            </svg>
        </CubeBox>
    );
}

function Viewport() {
    return (
        <Canvas>
            <MachineBox><Machine /></MachineBox>
            <NavCube />
            <AxisBox>
                <svg width="38" height="52" viewBox="0 0 38 52" role="img" aria-label="Axis cross">
                    <path d="M8 34V14" stroke="#1c1c8c" strokeWidth="1.500" /><path d="M8 10l3 10H5z" fill="#1c1c8c" />
                    <path d="M8 34l10-6" stroke="#1c7a1c" strokeWidth="1.500" /><path d="M22 26l-8 1 3 5z" fill="#1c7a1c" />
                    <path d="M8 34l12 7" stroke="#8c1c1c" strokeWidth="1.500" /><path d="M27 45l-10-3 4-5z" fill="#8c1c1c" />
                    <AxisText x="9" y="10">Z</AxisText><AxisText x="23" y="24">Y</AxisText><AxisText x="28" y="44">X</AxisText>
                </svg>
            </AxisBox>
        </Canvas>
    );
}

function Chrome({ badge }) {
    return (
        <svg width="46" height="46" viewBox="0 0 46 46" aria-hidden="true">
            <circle cx="20" cy="25" r="18" fill="#fbc116" />
            <path d="M20 25L4.400 16A18 18 0 0 1 35.600 16H20z" fill="#e33b2e" />
            <path d="M20 25L4.400 16A18 18 0 0 0 20 43L28 29z" fill="#229342" />
            <circle cx="20" cy="25" r="9.500" fill="#fff" /><circle cx="20" cy="25" r="7.500" fill="#4285f4" />
            {badge === 'R' ? (
                <>
                    <circle cx="34" cy="12" r="12" fill="#e8407a" />
                    <BadgeText x="34" y="17">R</BadgeText>
                </>
            ) : (
                <>
                    <circle cx="34" cy="12" r="12" fill="#c7c9cf" />
                    <path d="M30 1q9-2 12 5l-2 6-8-2z" fill="#3a302c" /><circle cx="35" cy="8" r="4" fill="#c99d80" />
                    <path d="M24 18q6-8 12-5l8 5q-9 9-20 0z" fill="#f3f4f8" /><path d="M23 7l6 6-5 6z" fill="#7f8780" />
                </>
            )}
        </svg>
    );
}

const apps = [
    ['Task view', false, <svg width="36" height="36" viewBox="0 0 36 36"><path d="M1 9h26v26H1z" fill="#2a2a2a" /><path d="M10 1h25v24H10z" fill="#fff" opacity=".75" /><path d="M10 9h17v16H10z" fill="#b9b9b9" /></svg>],
    ['File Explorer', true, <svg width="38" height="36" viewBox="0 0 38 36"><path d="M1 3q0-2 2-2h11l4 5h17q2 0 2 2v20H1z" fill="#dc9a08" /><path d="M1 9h34q2 0 2 2v22q0 2-2 2H3q-2 0-2-2z" fill="#ffcb3d" /><path d="M7 35v-7q0-4 4-4h16q4 0 4 4v7z" fill="#1479c9" /><path d="M13 29h12" stroke="#0a4f92" strokeWidth="3" /></svg>],
    ['Copilot', false, (
        <svg width="36" height="36" viewBox="0 0 36 36">
            <defs>
                <linearGradient id="cpA" x1="0" y1="0" x2="0" y2="1"><stop offset="0" stopColor="#1a8af0" /><stop offset=".5" stopColor="#35c0a0" /><stop offset="1" stopColor="#f0c52c" /></linearGradient>
                <linearGradient id="cpB" x1="1" y1="0" x2="0" y2="1"><stop offset="0" stopColor="#a05cf0" /><stop offset=".5" stopColor="#ef5a9c" /><stop offset="1" stopColor="#ff9a3c" /></linearGradient>
            </defs>
            <path d="M9 1h15q3 0 4 4l2 5h-7q-3 0-4 4l-4 11q-1 3-5 3H5q-6 0-4-7L5 6q1-5 4-5z" fill="url(#cpA)" />
            <path d="M27 35H12q-3 0-4-4l-1-5h6q3 0 4-4l4-11q1-3 5-3h5q6 0 4 7l-4 15q-1 5-4 5z" fill="url(#cpB)" />
            <path d="M16 1h8q3 0 4 4l2 5h-7q-3-1-4-5z" fill="#1552c8" />
            <path d="M17 12h4l-4 13h-4z" fill="#eee" />
        </svg>
    )],
    ['Edge', false, (
        <svg width="36" height="36" viewBox="0 0 36 36">
            <defs><linearGradient id="edA" x1="0" y1="0" x2="1" y2="0"><stop offset="0" stopColor="#1e9be8" /><stop offset="1" stopColor="#52dc7a" /></linearGradient></defs>
            <circle cx="18" cy="18" r="17.500" fill="#0f6fc4" />
            <path d="M1 16C3-3 34-4 35.500 16c0 6-5 8-10 7-3-1-3-2-2-4C25 9 8 6 1 16z" fill="url(#edA)" />
            <path d="M14 17q4-7 9-1-2 3 1 6 4 2 9 0l3-1-2 8q-4 0-9-1-10-1-11-11z" fill="#eee" /><path d="M12 14q-4 17 14 15l6-1q-6 8-16 7-8-1-10-8-2-9 6-13z" fill="#0c4a9c" />
        </svg>
    )],
    ['Store', false, <svg width="36" height="38" viewBox="0 0 36 38"><path d="M10 9V2h16v7" fill="none" stroke="#1fa5e8" strokeWidth="2.500" /><path d="M1 8h34v26q0 3-3 3H4q-3 0-3-3z" fill="#17528c" /><path d="M10 14h7v7h-7z" fill="#f25022" /><path d="M19 14h7v7h-7z" fill="#7fba00" /><path d="M10 23h7v7h-7z" fill="#00a4ef" /><path d="M19 23h7v7h-7z" fill="#ffb900" /></svg>],
    ['Chrome R', true, <Chrome badge="R" />],
    ['Chrome', true, <Chrome />],
    ['FreeCAD', true, <FreeCadLogo width={31} height={37} />],
    ['Recorder', true, <svg width="36" height="36" viewBox="0 0 36 36"><circle cx="18" cy="18" r="17" fill="#fff" stroke="#555" /><circle cx="18" cy="18" r="15.500" fill="#050505" /><circle cx="18" cy="18" r="9.500" fill="#f01c1c" /></svg>],
];

function Taskbar() {
    return (
        <Task>
            <Weather>
                <svg width="38" height="36" viewBox="0 0 38 36" aria-hidden="true">
                    <circle cx="19" cy="18" r="15.500" fill="#f39a1e" />
                    <path d="M5 14a5 5 0 0 1 1-9 6 6 0 0 1 11 1 4 4 0 0 1 1 8z" fill="#a9c2ee" stroke="#8caee6" />
                    <path d="M20 33a5 5 0 0 1 1-9 6 6 0 0 1 11 0 4.500 4.500 0 0 1 1 9z" fill="#a9c2ee" stroke="#8caee6" />
                </svg>
                <WeatherText><span>32°C</span><Muted>Sebagian cerah</Muted></WeatherText>
            </Weather>
            <Apps>
                <AppButton aria-label="Start">
                    <svg width="36" height="36" viewBox="0 0 36 36">
                        <defs><linearGradient id="win" x1="0" y1="0" x2="1" y2="1"><stop offset="0" stopColor="#4cc8ff" /><stop offset="1" stopColor="#0072d0" /></linearGradient></defs>
                        <path d="M0 1h17v17H0zM18 1h17v17H18zM0 19h17v17H0zM18 19h17v17H18z" fill="url(#win)" />
                    </svg>
                </AppButton>
                <SearchBox>
                    <svg width="24" height="24" viewBox="0 0 24 24" aria-hidden="true"><circle cx="11" cy="10" r="8.500" fill="none" stroke="#222" strokeWidth="2.400" /><path d="M17 16l5 6" stroke="#222" strokeWidth="3" /></svg>
                    <SearchInput aria-label="Search" placeholder="Search" />
                    <svg width="72" height="40" viewBox="0 0 72 40" aria-hidden="true">
                        <path d="M3 10h66q4 10-1 20-30 12-63 0-6-10-2-20z" fill="#2f4f8c" /><path d="M34 12h35q3 10-1 20H38z" fill="#6fbfd6" />
                        <path d="M50 14q10 4 16 2v8q-8 4-16 0z" fill="#a5e2ea" />
                        <path d="M2 12q4-12 14-10 6-4 14 0 8-4 15 0 10-3 17 3 10 3 8 10-4 3-10 2-8 3-14 0-10 3-16 0-12 3-18 0-8 1-10-5z" fill="#8b84ac" />
                        <path d="M10 8q6-6 14-1M28 6q7-5 14 0M46 7q7-4 12 1" stroke="#b9b2cc" strokeWidth="4" fill="none" />
                        <path d="M27 15l-4 7 3 1-6 10M26 23l5 7M24 22l-8 3" stroke="#fff" strokeWidth="1.600" fill="none" />
                        <path d="M6 32q12-7 24-1 16-6 36-1-4 9-34 10-20-1-26-8z" fill="#5f8a3c" /><path d="M22 35q14-7 26 0-10 4-26 0z" fill="#b5a262" />
                    </svg>
                </SearchBox>
                {apps.map(([label, running, art]) => (
                    <AppButton key={label} aria-label={label} $running={running}>{art}</AppButton>
                ))}
            </Apps>
            <Tray>
                <svg width="16" height="10" viewBox="0 0 16 10" aria-hidden="true"><path d="M1 9l7-7 7 7" fill="none" stroke="#222" strokeWidth="2" /></svg>
                <svg width="26" height="20" viewBox="0 0 26 20" aria-hidden="true"><path d="M6 18a5 5 0 0 1-1-10 8 8 0 0 1 15-1 6 6 0 0 1 1 11z" fill="#bfbfbf" stroke="#333" strokeWidth="1.600" /><path d="M6 17L18 6" stroke="#e6e6e6" strokeWidth="3" /></svg>
                <TrayGroup>
                    <svg width="24" height="20" viewBox="0 0 24 20" aria-hidden="true"><path d="M1 7q11-11 22 0M4.500 11q7.500-7 15 0M8 14.500q4-4 8 0" fill="none" stroke="#222" strokeWidth="1.800" /><circle cx="12" cy="17" r="2" fill="#222" /></svg>
                    <svg width="25" height="20" viewBox="0 0 25 20" aria-hidden="true"><path d="M1 7h4l5-5v16l-5-5H1zM13 7q2 3 0 6M16 4q4 6 0 12M19 2q6 8 0 16" fill="none" stroke="#222" strokeWidth="1.500" /></svg>
                    <svg width="30" height="18" viewBox="0 0 30 18" aria-hidden="true"><rect x="1" y="2" width="25" height="14" rx="4" fill="#fff" stroke="#222" strokeWidth="1.800" /><path d="M3.500 4.500h7v9h-7z" fill="#f0a30a" /><path d="M28 6v6" stroke="#222" strokeWidth="2" /></svg>
                </TrayGroup>
                <Clock><span>14:20</span><span>06/05/2026</span></Clock>
            </Tray>
        </Task>
    );
}

function App() {
    const [current, setCurrent] = useState(0);

    return (
        <Page>
            <GlobalStyle />
            <TitleBar>
                <FreeCadLogo width={20} height={24} />
                <WindowTitle>* Assembly - FreeCAD 1.0.2</WindowTitle>
                <WindowButtons>
                    <WindowButton aria-label="Minimize"><svg width="16" height="16" viewBox="0 0 16 16"><path d="M0 8.500h16" stroke="#999" /></svg></WindowButton>
                    <WindowButton aria-label="Restore"><svg width="16" height="16" viewBox="0 0 16 16"><rect x=".5" y="3.500" width="12" height="12" rx="2" fill="none" stroke="#888" /><path d="M3.500 3V2q0-1.500 2-1.500h8q2 0 2 2v8q0 2-2 2" fill="none" stroke="#888" /></svg></WindowButton>
                    <WindowButton aria-label="Close"><svg width="16" height="16" viewBox="0 0 16 16"><path d="M0 0l16 16M16 0L0 16" stroke="#888" /></svg></WindowButton>
                </WindowButtons>
            </TitleBar>
            <RecorderBar />
            <MenuBar>
                {menus.map(m => <MenuItem key={m}><u>{m[0]}</u>{m.slice(1)}</MenuItem>)}
            </MenuBar>
            {standardBars.map((groups, i) => (
                <ToolBar key={i}>
                    {groups.map((g, n) => <ToolGroup key={n} items={g} />)}
                </ToolBar>
            ))}
            <Main>
                <ModelPanel />
                <Work>
                    <Viewport />
                    <DocTabs>
                        {documents.map((d, i) => (
                            <DocTab key={d} $active={i === current} onClick={() => setCurrent(i)}>
                                <DocIcon /><DocName>{d}</DocName><CloseIcon />
                            </DocTab>
                        ))}
                        <DocTab aria-label="More documents"><DocIcon /><DocName>     </DocName></DocTab>
                        <TabScroll>
                            <TabScrollButton aria-label="Previous tabs"><svg width="6" height="10" viewBox="0 0 6 10"><path d="M6 0v10L0 5z" fill="#888" /></svg></TabScrollButton>
                            <TabScrollButton aria-label="Next tabs"><svg width="6" height="10" viewBox="0 0 6 10"><path d="M0 0v10l6-5z" fill="#444" /></svg></TabScrollButton>
                        </TabScroll>
                    </DocTabs>
                </Work>
            </Main>
            <StatusBar>
                <StatusText>Preselected: Assembly.Assembly.Casing.Body.Pocket003.Face31 (220.50 mm, 0.00 mm, 938.40 mm)</StatusText>
                <StatusButton aria-label="Notifications">
                    <svg width="22" height="22" viewBox="0 0 22 22"><path d="M1 1h20v20H1z" fill="#4373b8" stroke="#2c5590" /><path d="M1 1l10 9L21 1" fill="none" stroke="#5583c4" /></svg>
                    <Caret $dark />
                </StatusButton>
                <StatusButton aria-label="Navigation style" $center>
                    <svg width="22" height="22" viewBox="0 0 22 22"><rect x="2" y="2" width="18" height="18" rx="3" fill="none" stroke="#2e3436" strokeWidth="2.200" /><path d="M2 13h18M11 13v7" stroke="#2e3436" strokeWidth="2.200" /></svg>
                    <Caret $dark />
                </StatusButton>
                <SizeSelect>
                    <select aria-label="View size" defaultValue="2956,71 mm x 1595,87 mm"><option>2956,71 mm x 1595,87 mm</option></select>
                    <Caret $dark />
                </SizeSelect>
            </StatusBar>
            <Taskbar />
        </Page>
    );
}

export default App;


const GlobalStyle = createGlobalStyle`
    * {
        box-sizing: border-box;
    }
    body {
        margin: 0;
        background: #f0f0f0;
        overflow: hidden;
    }
    body, button, select, input {
        font-family: "Open Sans", "Noto Sans", sans-serif;
        font-size: 17px;
        color: #000;
    }
    button {
        border: none;
        background: none;
        padding: 0;
    }
    svg {
        display: block;
        flex: none;
    }
`;

const Page = styled.div`
    position: relative;
    display: flex;
    flex-direction: column;
    height: 100vh;
`;

const TitleBar = styled.header`
    display: flex;
    align-items: center;
    height: 34px;
    padding-left: 4px;
    background: #f2f2f2;
`;

const WindowTitle = styled.h1`
    margin: 0 0 0 11px;
    font-size: 17px;
    font-weight: 400;
    color: #8e8e8e;
`;

const WindowButtons = styled.div`
    display: flex;
    margin-left: auto;
    padding-right: 2px;
`;

const WindowButton = styled.button`
    display: flex;
    align-items: center;
    justify-content: center;
    width: 70px;
    height: 34px;
`;

const Recorder = styled.div`
    position: absolute;
    top: 0;
    left: 50%;
    display: flex;
    align-items: center;
    width: 750px;
    height: 38px;
    padding: 0 41px;
    background: #252b34;
    clip-path: polygon(0 0, 100% 0, 712px 100%, 38px 100%);
    transform: translateX(-50%);
`;

const RecorderIcon = styled.button`
    display: flex;
    align-items: center;
    justify-content: center;
    width: 38px;
    height: 34px;
`;

const RecorderText = styled.span`
    width: 100px;
    text-align: center;
    font-size: 16px;
    color: #fff;
`;

const RecorderTitle = styled(RecorderText)`
    flex: 1;
    padding-left: 32px;
`;

const RecorderLine = styled.div`
    width: 1px;
    height: 12px;
    margin: 0 ${p => p.$tight ? 1 : 4}px;
    background: #59606a;
`;

const RecordButton = styled.button`
    display: flex;
    align-items: center;
    gap: 8px;
    margin-right: 15px;
    font-family: "Liberation Sans", Arial, sans-serif;
    font-size: 17px;
    font-weight: 700;
    color: #dcdfe2;
`;

const RecordDot = styled.span`
    width: 20px;
    height: 20px;
    border-radius: 50%;
    background: #d92b2b;
`;

const Camera = styled.button`
    display: flex;
    align-items: center;
    justify-content: center;
    width: 34px;
    height: 34px;
    background: #4a7acb;
`;

const MenuBar = styled.nav`
    display: flex;
    gap: 22px;
    height: 33px;
    padding-left: 15px;
    background: #fff;
    border-bottom: 1px solid #e4e4e4;
`;

const MenuItem = styled.button`
    u {
        text-underline-offset: 4px;
    }
`;

const ToolBar = styled.div`
    display: flex;
    align-items: center;
    height: 55px;
    background: linear-gradient(#f4f4f4, #eeeeee);
    border-bottom: 2px solid #d4d4d4;
`;

const Group = styled.div`
    display: flex;
    align-items: center;

    & + & {
        margin-left: 3px;
    }
`;

const Grip = styled.div`
    width: 8px;
    height: 26px;
    margin: 0 0 0 7px;
    background-image: radial-gradient(circle, #a9a9a9 1px, transparent 1px);
    background-size: 4px 4px;
`;

const Separator = styled.div`
    width: 2px;
    height: 29px;
    margin: 0 6px;
    background: #aaa;
`;

const ToolButton = styled.button`
    position: relative;
    display: flex;
    align-items: center;
    justify-content: center;
    width: 48px;
    height: 44px;
`;

const Caret = styled.span`
    border: solid transparent;
    border-width: ${p => p.$small ? '5px 5px 0' : '7px 6px 0'};
    border-top-color: ${p => p.$dark ? '#555' : '#888'};
    pointer-events: none;
`;

const CornerCaret = styled(Caret)`
    position: absolute;
    right: 9px;
    bottom: 1px;
`;

const DropButton = styled.button`
    display: flex;
    align-items: center;
    width: 20px;
    height: 44px;
`;

const box = css`
    background: linear-gradient(#fff, #f1f1f1);
    border: 1px solid #b0b0b0;
    border-bottom-width: 2px;
    border-radius: 4px;
`;

const Workbench = styled.div`
    ${box}
    display: flex;
    align-items: center;
    width: 227px;
    height: 37px;
    margin: 0 1px 0 3px;
    padding: 0 15px 0 9px;
`;

const WorkbenchSelect = styled.select`
    flex: 1;
    height: 100%;
    padding: 0 0 0 10px;
    appearance: none;
    border: none;
    background: none;
    font-size: 16px;
`;

const Main = styled.main`
    display: flex;
    flex: 1;
    min-height: 0;
`;

const Dock = styled.section`
    display: flex;
    flex-direction: column;
    width: 34.5%;
    padding-right: 9px;
`;

const TabRow = styled.div`
    display: flex;
    align-items: ${p => p.$bottom ? 'flex-start' : 'flex-end'};
    height: 39px;
`;

const DockTab = styled.button`
    height: ${p => p.$active ? 38 : 33}px;
    padding: 0 6px 0 7px;
    font-size: ${p => p.$active ? 15 : 16}px;
    color: ${p => p.$active ? '#000' : '#666'};
    background: ${p => p.$active ? '#f8f8f8' : '#e0e0e0'};
    border: 1px solid #adadad;
    ${p => p.$bottom
        ? 'border-top-width: 0; border-bottom-width: 2px; border-radius: 0 0 4px 4px;'
        : 'border-bottom-width: 0; border-top-width: 2px; border-radius: 4px 4px 0 0;'}
`;

const DockTitle = styled.div`
    display: grid;
    grid-template-columns: 1fr auto;
    align-items: center;
    height: 24px;
    padding: 0 5px 0 4px;
    font-size: 15px;
    text-align: center;
`;

const DockTools = styled.div`
    display: flex;
    gap: 14px;
`;

const DockTool = styled.button`
    width: 14px;
    height: 14px;
`;

const TreeArea = styled.div`
    display: flex;
    flex: 49 1 0;
    min-height: 0;
`;

const Tree = styled.ul`
    flex: 1;
    margin: 0;
    padding: 0;
    overflow: hidden;
    list-style: none;
`;

const TreeRow = styled.li`
    display: flex;
    align-items: center;
    height: 33px;
    padding: 0 0 2px 11px;
    font-size: 22px;
    font-weight: ${p => p.$bold ? 700 : 400};

    svg + svg {
        margin: 0 12px 0 19px;
    }
`;

const ScrollBar = styled.div`
    display: flex;
    flex-direction: column;
    width: 20px;
    border: 1px solid #b5b5b5;
    background: #e4e4e4;
`;

const ScrollEnd = styled.button`
    display: flex;
    align-items: center;
    justify-content: center;
    height: 20px;
    background: #f8f8f8;
`;

const ScrollTrack = styled.div`
    flex: 1;
    border: solid #adadad;
    border-width: 1px 0;
`;

const ScrollThumb = styled.div`
    height: 82%;
    background: linear-gradient(90deg, #fff, #f4f4f4);
    border-bottom: 1px solid #adadad;
`;

const Properties = styled.div`
    flex: 50 1 0;
    min-height: 0;
    margin-top: 15px;
    padding-right: 2px;
    border: 1px solid #dadada;
    border-bottom: 2px solid #fafafa;
`;

const PropTable = styled.table`
    width: 100%;
    border-collapse: collapse;
    border-right: 1px solid #aaa;
    text-align: left;
`;

const PropHead = styled.th`
    height: 31px;
    padding: 0 5px;
    font-size: 16px;
    background: #ededed;
    border-bottom: 2px solid #aaa;
`;

const PropIndent = styled.td`
    width: 30px;
    padding: 0;
`;

const cell = css`
    height: 31px;
    padding: 0 5px;
    font-weight: 400;
    border-bottom: ${p => p.$last ? 2 : 1}px solid #aaa;
`;

const PropName = styled.th`
    ${cell}
    width: 119px;
    border-right: 1px solid #aaa;
`;

const PropValue = styled.td`
    ${cell}
`;

const Work = styled.section`
    display: flex;
    flex-direction: column;
    flex: 1;
    min-width: 0;
`;

const Canvas = styled.div`
    position: relative;
    flex: 1;
    background: #f8f8f8;
`;

const MachineBox = styled.div`
    position: absolute;
    left: 298px;
    top: 58px;
`;

const CubeBox = styled.div`
    position: absolute;
    top: 0;
    right: 0;
`;

const CubeText = styled.text`
    font-family: "Liberation Sans", Arial, sans-serif;
    font-size: 32px;
    font-weight: 700;
    fill: #98a2ac;
`;

const AxisBox = styled.div`
    position: absolute;
    right: 3px;
    bottom: 15px;
`;

const AxisText = styled.text`
    font-family: "Liberation Sans", Arial, sans-serif;
    font-size: 10px;
    font-weight: 700;
`;

const DocTabs = styled.div`
    position: relative;
    display: flex;
    align-items: flex-start;
    height: 49px;
    overflow: hidden;
`;

const DocTab = styled.button`
    display: flex;
    flex: none;
    align-items: center;
    height: ${p => p.$active ? 47 : 43}px;
    margin-right: 1px;
    padding: 0 12px 0 9px;
    font-size: 16px;
    color: ${p => p.$active ? '#000' : '#666'};
    background: ${p => p.$active ? '#f8f8f8' : '#e0e0e0'};
    border: 1px solid #adadad;
    border-top-color: ${p => p.$active ? '#f8f8f8' : '#adadad'};
    border-bottom-width: 2px;
    border-radius: 0 0 4px 4px;
`;

const DocName = styled.span`
    padding: 0 23px 0 18px;
    font-size: 16px;
    white-space: pre;
    color: inherit;
`;

const TabScroll = styled.div`
    position: absolute;
    top: 1px;
    right: 0;
    display: flex;
    gap: 1px;
    background: #e0e0e0;
`;

const TabScrollButton = styled.button`
    ${box}
    display: flex;
    align-items: center;
    justify-content: center;
    width: 21px;
    height: 45px;
`;

const StatusBar = styled.footer`
    display: flex;
    align-items: center;
    gap: 10px;
    height: 46px;
    padding: 0 2px 0 3px;
`;

const StatusText = styled.span`
    flex: 1;
    font-size: 16px;
`;

const StatusButton = styled.button`
    ${box}
    display: flex;
    align-items: center;
    justify-content: space-between;
    width: 134px;
    height: 38px;
    padding: 0 3px 0 ${p => p.$center ? 55 : 1}px;
`;

const SizeSelect = styled.div`
    ${box}
    display: flex;
    align-items: center;
    height: 36px;
    padding: 0 3px 0 6px;

    select {
        padding: 0 9px 0 0;
        appearance: none;
        border: none;
        background: none;
        font-size: 16px;
    }
`;

const Task = styled.footer`
    display: grid;
    grid-template-columns: 1fr auto 1fr;
    align-items: center;
    height: 72px;
    background: #eee;
    border-top: 2px solid #c2c2c2;
`;

const Weather = styled.div`
    display: flex;
    align-items: center;
    gap: 10px;
    padding: 0 0 2px 28px;
`;

const WeatherText = styled.div`
    display: flex;
    flex-direction: column;
    line-height: 24px;
`;

const Muted = styled.span`
    color: #5c5c5c;
`;

const Apps = styled.div`
    display: flex;
    align-items: center;
`;

const AppButton = styled.button`
    position: relative;
    display: flex;
    align-items: center;
    justify-content: center;
    width: 66px;
    height: 70px;
    padding-bottom: 2px;

    &::after {
        content: "";
        position: absolute;
        bottom: 6px;
        width: 8px;
        height: 5px;
        border-radius: 3px;
        background: ${p => p.$running ? '#808080' : 'transparent'};
    }
`;

const SearchBox = styled.label`
    display: flex;
    align-items: center;
    width: 328px;
    height: 46px;
    margin: 0 4px 2px 6px;
    padding: 0 4px 0 14px;
    background: #fafafa;
    border: 2px solid #d9d9d9;
    border-radius: 23px;
`;

const SearchInput = styled.input`
    flex: 1;
    min-width: 0;
    padding: 0 0 0 14px;
    border: none;
    outline: none;
    background: none;
    font-size: 19px;

    &::placeholder {
        color: #5f5f5f;
    }
`;

const Tray = styled.div`
    display: flex;
    align-items: center;
    justify-content: flex-end;
    gap: 25px;
    padding: 0 29px 2px 0;

    svg:first-child + svg {
        margin-left: 3px;
    }
`;

const TrayGroup = styled.div`
    display: flex;
    align-items: center;
    gap: 12px;
`;

const Clock = styled.time`
    display: flex;
    flex-direction: column;
    align-items: flex-end;
    line-height: 24px;
`;

const BadgeText = styled.text`
    font-size: 14px;
    text-anchor: middle;
    fill: #fff;
`;
